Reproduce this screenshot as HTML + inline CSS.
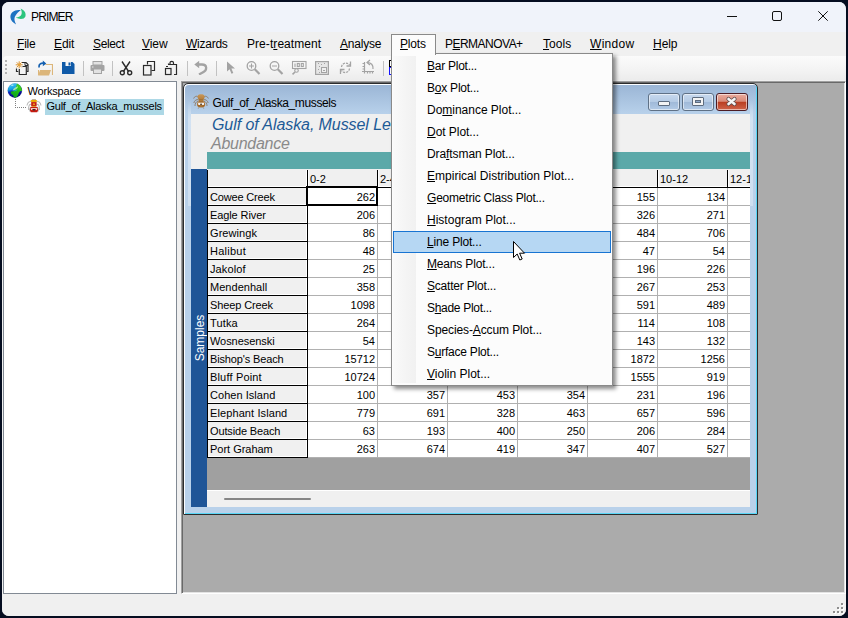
<!DOCTYPE html>
<html><head><meta charset="utf-8"><title>PRIMER</title>
<style>
*{box-sizing:border-box;margin:0;padding:0}
html,body{width:848px;height:618px;overflow:hidden;background:#050d20;font-family:"Liberation Sans",sans-serif;}
.abs{position:absolute}
span{position:absolute;white-space:nowrap;color:#000}
u{text-decoration:underline;text-underline-offset:1px;text-decoration-thickness:1px}
#win{position:absolute;left:2px;top:2px;width:844px;height:614px;border-radius:7px;background:#f0f0f0;overflow:hidden}
#title{position:absolute;left:0;top:0;width:844px;height:30px;background:#f0f3fa}
.tt{font-size:12px;line-height:14px}
#menubar{position:absolute;left:0;top:30px;width:844px;height:24px;background:#f0f0f0}
.mi{font-size:12px;line-height:14px}
#toolbar{position:absolute;left:1px;top:54px;width:843px;height:24px;background:linear-gradient(#fbfbfb,#f3f3f3 60%,#ececec);border-radius:4px 0 0 4px}
.sep{position:absolute;top:5px;width:1px;height:15px;background:#c2c2c2}
#left{position:absolute;left:1px;top:79px;width:174px;height:513px;background:#fff;border:1px solid #828a94}
#mdi{position:absolute;left:179px;top:79px;width:665px;height:513px;background:#ababab;border:1px solid;border-color:#a0a0a0 #fff #fff #a0a0a0;box-shadow:inset 1px 1px 0 0 #696969,inset -1px -1px 0 0 #e3e3e3}
#status{position:absolute;left:0;top:592px;width:844px;height:22px;background:#f0f0f0}
#child{position:absolute;left:181px;top:81px;width:575px;height:432px;border:1px solid #2c2c2c;border-radius:5px 5px 1px 1px;background:linear-gradient(#9ab5d5 0,#b7d0ea 29px,#b9d1ea 60px,#b9d1ea);box-shadow:inset 1px 1px 0 0 #fbfdff,inset -1px -1px 0 0 #58d6f6}
#content{position:absolute;left:7px;top:30px;width:559px;height:393px;background:#f0f0f0;overflow:hidden}
.gt{font-size:11px;line-height:13px}
.num{text-align:right}
#dd{position:absolute;left:389px;top:51px;width:222px;height:333px;background:#fcfcfc;border:1px solid #8a8a8a;box-shadow:3px 3px 4px rgba(0,0,0,.45)}
#ddg{position:absolute;left:1px;top:1px;width:23px;height:328px;background:linear-gradient(90deg,#fafafa,#f5f5f5 50%,#f1f1f1)}
#tab{position:absolute;left:389px;top:32px;width:45px;height:21px;background:#fcfcfc;border:1px solid #8a8a8a;border-bottom:none;z-index:3}

.cb{position:absolute;width:32px;height:18px;border-radius:3px;border:1px solid #5f7186;box-shadow:inset 0 0 0 1px rgba(255,255,255,.55)}
.cb.b{background:linear-gradient(#c7d9ee 0,#b5cbe5 48%,#9fb9d8 50%,#b2cae6 100%)}
.cb.c{background:linear-gradient(#eaac9f 0,#d98a78 46%,#b93c20 50%,#cf644a 100%);border-color:#4c1c24}
</style></head><body>
<div id="win">
<div id="title"><span id="t1" class="tt" style="left:29px;top:8px;letter-spacing:-0.85px;">PRIMER</span>
<svg class="abs" style="left:8px;top:6px" width="17" height="17" viewBox="0 0 17 17" ><path d="M10.800 2.200C5 1.200 0.200 4.200 0.400 9.200C0.600 12.600 3 14.600 6.200 16.400C4.600 13.600 3.600 10.600 5.600 7.600C6.800 5.200 8.800 3.600 10.800 2.200Z" fill="#1d72c2"/><path d="M10.600 0.600C14.200 2.200 16.400 5.200 15.400 8.400C14.200 11.400 9.800 11.600 5.600 9.600C8.800 9.400 11 8.400 11.600 6C12 4 11.400 2.400 10.600 0.600Z" fill="#2bc47e"/></svg>
<svg class="abs" style="left:718px;top:6px" width="120" height="20" viewBox="0 0 120 20" fill="none" stroke="#111" stroke-width="1"><path d="M7 8.500H17"/><rect x="52.500" y="3.500" width="9" height="9" rx="1.500"/><path d="M98.300 3.300L107.700 12.700M107.700 3.300L98.300 12.700"/></svg>
</div>
<div id="menubar">
<span id="t2" class="mi" style="left:15px;top:5px;letter-spacing:-0.21px;"><u>F</u>ile</span>
<span id="t3" class="mi" style="left:52px;top:5px;letter-spacing:-0.08px;"><u>E</u>dit</span>
<span id="t4" class="mi" style="left:91px;top:5px;letter-spacing:-0.36px;"><u>S</u>elect</span>
<span id="t5" class="mi" style="left:140px;top:5px;letter-spacing:-0.05px;"><u>V</u>iew</span>
<span id="t6" class="mi" style="left:184px;top:5px;letter-spacing:-0.25px;"><u>W</u>izards</span>
<span id="t7" class="mi" style="left:245px;top:5px;letter-spacing:0.06px;">Pre-t<u>r</u>eatment</span>
<span id="t8" class="mi" style="left:338px;top:5px;letter-spacing:-0.21px;"><u>A</u>nalyse</span>
<span id="t9" class="mi" style="left:398px;top:5px;letter-spacing:-0.18px;"><u>P</u>lots</span>
<span id="t10" class="mi" style="left:443px;top:5px;letter-spacing:-0.52px;">P<u>E</u>RMANOVA+</span>
<span id="t11" class="mi" style="left:541px;top:5px;letter-spacing:0.06px;"><u>T</u>ools</span>
<span id="t12" class="mi" style="left:588px;top:5px;letter-spacing:0.30px;"><u>W</u>indow</span>
<span id="t13" class="mi" style="left:651px;top:5px;letter-spacing:-0.05px;"><u>H</u>elp</span>
</div>
<div id="toolbar"><div class="abs" style="left:2px;top:4px;width:2px;height:2px;background:#b4b4b4"></div><div class="abs" style="left:2px;top:8px;width:2px;height:2px;background:#b4b4b4"></div><div class="abs" style="left:2px;top:12px;width:2px;height:2px;background:#b4b4b4"></div><div class="abs" style="left:2px;top:16px;width:2px;height:2px;background:#b4b4b4"></div><svg class="abs" style="left:12px;top:4px" width="15" height="16" viewBox="0 0 15 16" ><path d="M6.800 2.500H11L13 4.500V11.500H11.500" fill="#f4f4f4" stroke="#2b2b2b" stroke-width="1.200"/><path d="M10 2.700V5.500H13" fill="none" stroke="#2b2b2b" stroke-width="1"/><path d="M4.300 9V14.500H11.300V6.500H7.500" fill="#f4f4f4" stroke="#2b2b2b" stroke-width="1.200"/><path d="M1.500 8.500V11.500H3.300" fill="none" stroke="#2b2b2b" stroke-width="1.200"/><g stroke="#d98a1e" stroke-width="0.900"><path d="M4.200 1.300V8.300M0.700 4.800H7.700M1.700 2.300L6.700 7.300M6.700 2.300L1.700 7.300"/></g><circle cx="4.200" cy="4.800" r="1.200" fill="#e9a53a"/></svg><svg class="abs" style="left:34px;top:4px" width="16" height="16" viewBox="0 0 16 16" ><path d="M8.500 4.500H15.500V15" fill="none" stroke="#dcb67a" stroke-width="1.200"/><path d="M1 15.500L3 10H14L12 15.500Z" fill="#dcb67a"/><path d="M1.500 15V10" stroke="#dcb67a" stroke-width="1"/><path d="M2 7.500C1.500 3.500 4.500 2.800 7.500 3.300" fill="none" stroke="#1560b0" stroke-width="1.700"/><path d="M5.800 0.500L9.300 3.400L5.800 6.300Z" fill="#1560b0"/></svg><svg class="abs" style="left:59px;top:6px" width="13" height="12" viewBox="0 0 13 12" ><path d="M0 0H10.500L12.500 2V12H0Z" fill="#0f5aa8"/><rect x="3.500" y="0" width="5.500" height="4" fill="#f6f6f6"/><rect x="6.500" y="0.500" width="2" height="3" fill="#0f5aa8"/></svg><div class="sep" style="left:80px"></div><svg class="abs" style="left:87px;top:5px" width="15" height="13" viewBox="0 0 15 13" ><rect x="3" y="0.500" width="9" height="3.500" fill="#e2e2e2" stroke="#a3a3a3" stroke-width="1"/><rect x="0.500" y="4" width="14" height="6" rx="1" fill="#a3a3a3"/><rect x="3.500" y="8" width="8" height="4.500" fill="#e2e2e2" stroke="#a3a3a3" stroke-width="1"/><rect x="2" y="5.500" width="1.500" height="1" fill="#e8e8e8"/></svg><div class="sep" style="left:109px"></div><svg class="abs" style="left:116px;top:5px" width="14" height="15" viewBox="0 0 14 15" ><g fill="none" stroke="#2b2b2b" stroke-width="1.400"><path d="M3 0.500L9.600 10.500M11 0.500L4.400 10.500"/><circle cx="3.300" cy="11.800" r="2"/><circle cx="10.700" cy="11.800" r="2"/></g></svg><svg class="abs" style="left:139px;top:4px" width="14" height="16" viewBox="0 0 14 16" ><g fill="none" stroke="#2b2b2b" stroke-width="1.200"><path d="M5.500 4.500V1.500H12.500V10.500H9.500"/><rect x="1.500" y="5.500" width="7.500" height="9.500" fill="#f2f2f2"/></g></svg><svg class="abs" style="left:161px;top:4px" width="15" height="16" viewBox="0 0 15 16" ><g fill="none" stroke="#2b2b2b" stroke-width="1.200"><path d="M4.500 4.500V3.500 M4 4.500H12.500V14.500H10" fill="#f2f2f2"/><path d="M6 4V2.800C6 1 9.500 1 9.500 2.800V4" /><rect x="1.500" y="8.500" width="5.500" height="6" fill="#f2f2f2"/><path d="M2 6.500H4"/></g></svg><div class="sep" style="left:184px"></div><svg class="abs" style="left:191px;top:4px" width="15" height="15" viewBox="0 0 15 15" ><path d="M2.500 4.500H8C13.500 4.500 13 10 9.500 12L5 14.500" fill="none" stroke="#a3a3a3" stroke-width="2.300"/><path d="M0.300 4.500L5.200 0.800V8.200Z" fill="#a3a3a3"/></svg><div class="sep" style="left:213px"></div><svg class="abs" style="left:223px;top:5px" width="10" height="14" viewBox="0 0 10 14" ><path d="M1 0.500V10.500L3.600 8.200L5.500 12.800L7.300 12L5.400 7.600H9Z" fill="#a3a3a3"/></svg><svg class="abs" style="left:243px;top:4px" width="15" height="16" viewBox="0 0 15 16" ><g fill="none" stroke="#a3a3a3"><circle cx="5.500" cy="6" r="4.300" stroke-width="1.300"/><path d="M3 6H8M5.500 3.500V8.500" stroke-width="1.100"/><path d="M8.800 9.300L13.500 14" stroke-width="2.200"/></g></svg><svg class="abs" style="left:266px;top:4px" width="15" height="16" viewBox="0 0 15 16" ><g fill="none" stroke="#a3a3a3"><circle cx="5.500" cy="6" r="4.300" stroke-width="1.300"/><path d="M3 6H8" stroke-width="1.100"/><path d="M8.800 9.300L13.500 14" stroke-width="2.200"/></g></svg><svg class="abs" style="left:288px;top:4px" width="16" height="15" viewBox="0 0 16 15" ><g fill="none" stroke="#a3a3a3" stroke-width="1.100"><rect x="1.500" y="1.500" width="13.500" height="7"/><path d="M4 3.500V7"/><rect x="6.300" y="3.500" width="2" height="3"/><rect x="10.300" y="3.500" width="2" height="3"/><circle cx="5.500" cy="10.500" r="1.800" fill="#f2f2f2"/><path d="M4 12L1.500 14.300" stroke-width="1.600"/></g></svg><svg class="abs" style="left:312px;top:5px" width="14" height="14" viewBox="0 0 14 14" ><rect x="0.600" y="0.600" width="12.800" height="12.800" fill="#e6e6e6" stroke="#a3a3a3" stroke-width="1.200"/><rect x="6.500" y="6.500" width="5" height="5" fill="#efefef" stroke="#a3a3a3" stroke-width="1"/><g fill="#a3a3a3"><rect x="3" y="2" width="1" height="1"/><rect x="6" y="3" width="1" height="1"/><rect x="9" y="2" width="1" height="1"/><rect x="4" y="5" width="1" height="1"/><rect x="3" y="8" width="1" height="1"/><rect x="4" y="11" width="1" height="1"/><rect x="8" y="9" width="2" height="1"/></g></svg><svg class="abs" style="left:336px;top:5px" width="13" height="14" viewBox="0 0 13 14" ><g fill="none" stroke="#a3a3a3" stroke-width="1.300" stroke-dasharray="2.200 1"><path d="M2.500 6C3 1.500 8.500 1 10.500 4"/><path d="M10.500 7.500C10 12 4.500 12.800 2.500 9.500"/></g><path d="M11.500 0.500V5H7.500" fill="none" stroke="#a3a3a3" stroke-width="1.300"/><path d="M1.500 13V8.500H5.500" fill="none" stroke="#a3a3a3" stroke-width="1.300"/></svg><svg class="abs" style="left:358px;top:3px" width="14" height="16" viewBox="0 0 14 16" ><g fill="none" stroke="#a3a3a3" stroke-width="1.200"><path d="M3.500 3V14.500M1 12.500H13"/><path d="M1.500 4.500H3.500M1.500 7.500H3.500M1.500 10H3.500M6.500 12.500V14.500M9 12.500V14.500M11.500 12.500V14.500"/><path d="M12 10C12.500 6 10 3.500 6.500 3.500"/><path d="M9 1L6 3.500L9 6"/></g></svg><div class="sep" style="left:380px"></div><div class="abs" style="left:386px;top:4px;width:3px;height:7px;border:1px solid #000;border-right:none;background:#fff"></div><div class="abs" style="left:386px;top:11px;width:3px;height:8px;border:1px solid #1414ff;border-right:none;background:#fff"></div></div>
<div id="left"><svg class="abs" style="left:3px;top:1px" width="16" height="16" viewBox="0 0 16 16" ><defs><linearGradient id="gl" x1="0.200" y1="0" x2="0.500" y2="1"><stop offset="0" stop-color="#4fd0f6"/><stop offset="0.400" stop-color="#0f9ce2"/><stop offset="0.560" stop-color="#0c22c0"/><stop offset="1" stop-color="#05056e"/></linearGradient><linearGradient id="gg" x1="0.800" y1="0" x2="0.300" y2="1"><stop offset="0" stop-color="#58d81c"/><stop offset="0.450" stop-color="#22c016"/><stop offset="1" stop-color="#0aa01a"/></linearGradient><clipPath id="gc"><circle cx="7.850" cy="7.500" r="7.200"/></clipPath></defs><circle cx="7.850" cy="7.500" r="7.200" fill="url(#gl)"/><g clip-path="url(#gc)"><path d="M10 0.500C12.500 1 15.500 3.500 15.200 7.500C14.800 8.500 14 7.800 13.300 8.200C12.300 8.800 11.800 10 11.300 11.200C10.800 12.300 10.300 13.500 9.300 14.800C8.500 15.300 7.200 15 6.800 14C6.500 13 6.500 12.300 5.500 11.800C4.300 11.200 3.500 10.200 3.700 9.200C4 8.200 5.500 8.300 6.800 8C8 7.600 8 6.500 8.500 5.500C9 4.200 9.500 2.500 10 0.500Z" fill="url(#gg)"/><path d="M5.500 7.200C6.300 5.600 8.800 3.800 11 3.200C11.500 4 10 5.500 9 6.300C8 7 6.500 7.800 5.500 7.200Z" fill="#b4f0b0" opacity="0.850"/><path d="M6.800 7.800C7.800 7.900 9.500 7.300 10.300 6.500" stroke="#16b4e6" stroke-width="0.900" fill="none"/><ellipse cx="5.300" cy="2.300" rx="1.300" ry="0.800" fill="#c8f4ee" opacity="0.800"/></g><circle cx="7.850" cy="7.500" r="7.100" fill="none" stroke="#202060" stroke-opacity="0.250" stroke-width="0.500"/></svg><span id="t14" class="gt" style="left:23.5px;top:3px;letter-spacing:-0.18px;">Workspace</span><div class="abs" style="left:11px;top:17px;width:1px;height:9px;background:repeating-linear-gradient(#808080 0 1px,transparent 1px 2px)"></div><div class="abs" style="left:11px;top:25px;width:12px;height:1px;background:repeating-linear-gradient(90deg,#808080 0 1px,transparent 1px 2px)"></div><svg class="abs" style="left:22px;top:17px" width="16" height="15" viewBox="0 0 16 15" ><g fill="none" stroke="#bdbdbd" stroke-width="1.100"><path d="M5.500 2.800C3.500 1.800 1.500 3.500 1 6.500"/><path d="M10.500 2.800C12.500 1.800 14.500 3.500 15 6.500"/><path d="M5.500 5.500C3.500 4.800 2.200 7 2.500 11"/><path d="M10.500 5.500C12.500 4.800 13.800 7 13.500 11"/><path d="M5 8C3.800 8.500 3.500 10.500 3.800 12.500"/><path d="M11 8C12.200 8.500 12.500 10.500 12.200 12.500"/></g><path d="M5.800 0.300H10V1H5.800Z" fill="#9aa0b0"/><path d="M5.100 1.300C5.100 0.600 10.700 0.600 10.700 1.300V3.300H5.100Z" fill="#e8a806"/><rect x="5.200" y="3.100" width="5.400" height="4" fill="#c41a10"/><rect x="6.800" y="4.600" width="2.200" height="1.100" rx="0.500" fill="#f4c020"/><rect x="5.800" y="6.900" width="4.200" height="0.900" fill="#e8c010"/><path d="M5 7.700H11C12.300 8.500 12.600 11.500 11.200 13.200H4.800C3.400 11.500 3.700 8.500 5 7.700Z" fill="#c41a10"/><path d="M4.600 9.300H11.400L10.800 11.300L9.700 9.900L8 11.800L6.300 9.900L5.200 11.300Z" fill="#fff"/><path d="M6.600 10.800L8 9.800L9.400 10.800L8.800 11.400H7.200Z" fill="#1a0000"/></svg><div class="abs" style="left:41px;top:17px;width:119px;height:16px;background:#add8e6"></div><span id="t15" class="gt" style="left:42.5px;top:18px;letter-spacing:-0.26px;">Gulf_of_Alaska_mussels</span></div>
<div id="mdi"></div>
<div id="status"><div class="abs" style="left:840px;top:10px;width:2px;height:2px;background:#fff"></div><div class="abs" style="left:839px;top:9px;width:2px;height:2px;background:#8e8e8e"></div><div class="abs" style="left:836px;top:14px;width:2px;height:2px;background:#fff"></div><div class="abs" style="left:835px;top:13px;width:2px;height:2px;background:#8e8e8e"></div><div class="abs" style="left:840px;top:14px;width:2px;height:2px;background:#fff"></div><div class="abs" style="left:839px;top:13px;width:2px;height:2px;background:#8e8e8e"></div><div class="abs" style="left:832px;top:18px;width:2px;height:2px;background:#fff"></div><div class="abs" style="left:831px;top:17px;width:2px;height:2px;background:#8e8e8e"></div><div class="abs" style="left:836px;top:18px;width:2px;height:2px;background:#fff"></div><div class="abs" style="left:835px;top:17px;width:2px;height:2px;background:#8e8e8e"></div><div class="abs" style="left:840px;top:18px;width:2px;height:2px;background:#fff"></div><div class="abs" style="left:839px;top:17px;width:2px;height:2px;background:#8e8e8e"></div></div>
<div id="child"><span id="t16" class="tt" style="left:28.5px;top:12px;letter-spacing:-0.38px;">Gulf_of_Alaska_mussels</span><svg class="abs" style="left:9px;top:10px" width="16" height="15" viewBox="0 0 16 15" ><defs><linearGradient id="bb" x1="0" y1="0" x2="0" y2="1"><stop offset="0" stop-color="#c9995a"/><stop offset="0.350" stop-color="#b8803e"/><stop offset="1" stop-color="#a86f30"/></linearGradient></defs><g fill="none" stroke="#8d7863" stroke-width="0.900"><path d="M5 3C3.500 1.500 1.500 2.500 0.600 4.500"/><path d="M11 3C12.500 1.500 14.500 2.500 15.400 4.500"/><path d="M5.500 5.800C3.500 5 1.500 6.500 0.800 9"/><path d="M10.500 5.800C12.500 5 14.500 6.500 15.200 9"/><path d="M5 7.500C3 7.500 2 9.500 2 12"/><path d="M11 7.500C13 7.500 14 9.500 14 12"/><path d="M6 13.300L5.300 14.500M10 13.300L10.700 14.500"/></g><path d="M4.600 2.200C4.600 -0.400 11.600 -0.400 11.600 2.200V3.200C11.600 4.300 10.800 4.800 10.500 5.200V7.200C11.500 7.700 12.300 9 12.200 10.800C12.100 12.500 10.800 13.600 8.100 13.600C5.400 13.600 4.100 12.500 4 10.800C3.900 9 4.700 7.700 5.700 7.200V5.200C5.400 4.800 4.600 4.300 4.600 3.200Z" fill="url(#bb)"/><path d="M5.700 5.200C7 5.700 9.200 5.700 10.500 5.200M5.700 7.200C7 7.600 9.200 7.600 10.500 7.200" stroke="#96662c" stroke-width="0.600" fill="none"/><path d="M5 8.800H11.200L10.800 10.900H9.300L8.800 9.900H7.400L6.900 10.900H5.400Z" fill="#f4f4f4"/><rect x="7.400" y="9.500" width="1.400" height="1.600" fill="#5a4a3a"/><path d="M5.200 11.600L6.700 12M11 11.600L9.500 12" stroke="#8a5a22" stroke-width="0.700"/></svg><div class="cb b" style="left:464px;top:9px"><div class="abs" style="left:9px;top:7px;width:12px;height:5px;background:#f4f4f4;border:1px solid #5e6c7e;border-radius:1px"></div></div><div class="cb b" style="left:498px;top:9px"><div class="abs" style="left:9px;top:3px;width:12px;height:9px;background:#f4f4f4;border:1px solid #5e6c7e;border-radius:1px"></div><div class="abs" style="left:12px;top:6px;width:6px;height:3px;background:#8ea7c6;border:1px solid #5e6c7e"></div></div><div class="cb c" style="left:532px;top:9px"><svg class="abs" style="left:8px;top:2px" width="14" height="12" viewBox="0 0 14 12"><path d="M3.500 3L9.500 8M9.500 3L3.500 8" stroke="#5d4a4a" stroke-width="4.200" stroke-linecap="round"/><path d="M3.500 3L9.500 8M9.500 3L3.500 8" stroke="#f6f6f6" stroke-width="2.600" stroke-linecap="round"/></svg></div>
<div class="abs" style="left:4px;top:16px;width:3px;height:106px;background:linear-gradient(rgba(255,255,255,0),rgba(255,255,255,.38) 20px,rgba(255,255,255,.3))"></div>
<div class="abs" style="left:566px;top:16px;width:3px;height:106px;background:linear-gradient(rgba(255,255,255,0),rgba(255,255,255,.38) 20px,rgba(255,255,255,.3))"></div>
<div id="content">
<span id="t17" class="" style="left:21px;top:2px;font-size:16px;line-height:18px;font-style:italic;color:#1d5a96;letter-spacing:-0.08px">Gulf of Alaska, Mussel Length</span>
<span id="t18" class="" style="left:20px;top:21px;letter-spacing:-0.27px;font-size:16px;line-height:18px;font-style:italic;color:#8a8a8a">Abundance</span>
<div class="abs" style="left:16px;top:38px;width:560px;height:17px;background:#5ba9a9;"></div>
<div class="abs" style="left:0px;top:55px;width:16px;height:340px;background:#1f5597;"></div>
<div class="abs" style="left:-21px;top:217px;width:60px;height:14px;transform:rotate(-90deg);color:#fff;font-size:12px;text-align:center;line-height:14px">Samples</div>
<div class="abs" style="left:117px;top:74px;width:460px;height:270px;background:#fff;"></div>
<div class="abs" style="left:16px;top:344px;width:560px;height:32px;background:#a0a0a0;"></div>
<div class="abs" style="left:16px;top:376px;width:560px;height:1px;background:#fff;"></div>
<div class="abs" style="left:117px;top:91px;width:460px;height:1px;background:#b0b0b0;"></div>
<div class="abs" style="left:117px;top:109px;width:460px;height:1px;background:#b0b0b0;"></div>
<div class="abs" style="left:117px;top:127px;width:460px;height:1px;background:#b0b0b0;"></div>
<div class="abs" style="left:117px;top:145px;width:460px;height:1px;background:#b0b0b0;"></div>
<div class="abs" style="left:117px;top:163px;width:460px;height:1px;background:#b0b0b0;"></div>
<div class="abs" style="left:117px;top:181px;width:460px;height:1px;background:#b0b0b0;"></div>
<div class="abs" style="left:117px;top:199px;width:460px;height:1px;background:#b0b0b0;"></div>
<div class="abs" style="left:117px;top:217px;width:460px;height:1px;background:#b0b0b0;"></div>
<div class="abs" style="left:117px;top:235px;width:460px;height:1px;background:#b0b0b0;"></div>
<div class="abs" style="left:117px;top:253px;width:460px;height:1px;background:#b0b0b0;"></div>
<div class="abs" style="left:117px;top:271px;width:460px;height:1px;background:#b0b0b0;"></div>
<div class="abs" style="left:117px;top:289px;width:460px;height:1px;background:#b0b0b0;"></div>
<div class="abs" style="left:117px;top:307px;width:460px;height:1px;background:#b0b0b0;"></div>
<div class="abs" style="left:117px;top:325px;width:460px;height:1px;background:#b0b0b0;"></div>
<div class="abs" style="left:117px;top:343px;width:460px;height:1px;background:#b0b0b0;"></div>
<div class="abs" style="left:17px;top:72px;width:560px;height:1px;background:#fff;"></div>
<div class="abs" style="left:186px;top:74px;width:1px;height:270px;background:#b0b0b0;"></div>
<div class="abs" style="left:186px;top:56px;width:1px;height:18px;background:#000;"></div>
<div class="abs" style="left:256px;top:74px;width:1px;height:270px;background:#b0b0b0;"></div>
<div class="abs" style="left:256px;top:56px;width:1px;height:18px;background:#000;"></div>
<div class="abs" style="left:326px;top:74px;width:1px;height:270px;background:#b0b0b0;"></div>
<div class="abs" style="left:326px;top:56px;width:1px;height:18px;background:#000;"></div>
<div class="abs" style="left:396px;top:74px;width:1px;height:270px;background:#b0b0b0;"></div>
<div class="abs" style="left:396px;top:56px;width:1px;height:18px;background:#000;"></div>
<div class="abs" style="left:466px;top:74px;width:1px;height:270px;background:#b0b0b0;"></div>
<div class="abs" style="left:466px;top:56px;width:1px;height:18px;background:#000;"></div>
<div class="abs" style="left:536px;top:74px;width:1px;height:270px;background:#b0b0b0;"></div>
<div class="abs" style="left:536px;top:56px;width:1px;height:18px;background:#000;"></div>
<div class="abs" style="left:117px;top:56px;width:1px;height:17px;background:#fff;"></div>
<div class="abs" style="left:187px;top:56px;width:1px;height:17px;background:#fff;"></div>
<div class="abs" style="left:257px;top:56px;width:1px;height:17px;background:#fff;"></div>
<div class="abs" style="left:327px;top:56px;width:1px;height:17px;background:#fff;"></div>
<div class="abs" style="left:397px;top:56px;width:1px;height:17px;background:#fff;"></div>
<div class="abs" style="left:467px;top:56px;width:1px;height:17px;background:#fff;"></div>
<div class="abs" style="left:537px;top:56px;width:1px;height:17px;background:#fff;"></div>
<div class="abs" style="left:17px;top:90px;width:99px;height:1px;background:#fff;"></div>
<div class="abs" style="left:17px;top:108px;width:99px;height:1px;background:#fff;"></div>
<div class="abs" style="left:17px;top:126px;width:99px;height:1px;background:#fff;"></div>
<div class="abs" style="left:17px;top:144px;width:99px;height:1px;background:#fff;"></div>
<div class="abs" style="left:17px;top:162px;width:99px;height:1px;background:#fff;"></div>
<div class="abs" style="left:17px;top:180px;width:99px;height:1px;background:#fff;"></div>
<div class="abs" style="left:17px;top:198px;width:99px;height:1px;background:#fff;"></div>
<div class="abs" style="left:17px;top:216px;width:99px;height:1px;background:#fff;"></div>
<div class="abs" style="left:17px;top:234px;width:99px;height:1px;background:#fff;"></div>
<div class="abs" style="left:17px;top:252px;width:99px;height:1px;background:#fff;"></div>
<div class="abs" style="left:17px;top:270px;width:99px;height:1px;background:#fff;"></div>
<div class="abs" style="left:17px;top:288px;width:99px;height:1px;background:#fff;"></div>
<div class="abs" style="left:17px;top:306px;width:99px;height:1px;background:#fff;"></div>
<div class="abs" style="left:17px;top:324px;width:99px;height:1px;background:#fff;"></div>
<div class="abs" style="left:17px;top:342px;width:99px;height:1px;background:#fff;"></div>
<div class="abs" style="left:115px;top:56px;width:1px;height:288px;background:#fff;"></div>
<div class="abs" style="left:16px;top:73px;width:560px;height:1px;background:#000;"></div>
<div class="abs" style="left:16px;top:91px;width:101px;height:1px;background:#000;"></div>
<div class="abs" style="left:16px;top:109px;width:101px;height:1px;background:#000;"></div>
<div class="abs" style="left:16px;top:127px;width:101px;height:1px;background:#000;"></div>
<div class="abs" style="left:16px;top:145px;width:101px;height:1px;background:#000;"></div>
<div class="abs" style="left:16px;top:163px;width:101px;height:1px;background:#000;"></div>
<div class="abs" style="left:16px;top:181px;width:101px;height:1px;background:#000;"></div>
<div class="abs" style="left:16px;top:199px;width:101px;height:1px;background:#000;"></div>
<div class="abs" style="left:16px;top:217px;width:101px;height:1px;background:#000;"></div>
<div class="abs" style="left:16px;top:235px;width:101px;height:1px;background:#000;"></div>
<div class="abs" style="left:16px;top:253px;width:101px;height:1px;background:#000;"></div>
<div class="abs" style="left:16px;top:271px;width:101px;height:1px;background:#000;"></div>
<div class="abs" style="left:16px;top:289px;width:101px;height:1px;background:#000;"></div>
<div class="abs" style="left:16px;top:307px;width:101px;height:1px;background:#000;"></div>
<div class="abs" style="left:16px;top:325px;width:101px;height:1px;background:#000;"></div>
<div class="abs" style="left:16px;top:343px;width:101px;height:1px;background:#000;"></div>
<div class="abs" style="left:116px;top:56px;width:1px;height:288px;background:#000;"></div>
<div class="abs" style="left:16px;top:56px;width:1px;height:288px;background:#000;"></div>
<div class="abs" style="left:115px;top:72px;width:72px;height:20px;border:2px solid #000"></div>
<span id="t19" class="gt" style="left:119px;top:59px;">0-2</span>
<span id="t20" class="gt" style="left:189px;top:59px;">2-4</span>
<span id="t21" class="gt" style="left:259px;top:59px;">4-6</span>
<span id="t22" class="gt" style="left:329px;top:59px;">6-8</span>
<span id="t23" class="gt" style="left:399px;top:59px;">8-10</span>
<span id="t24" class="gt" style="left:469px;top:59px;">10-12</span>
<span id="t25" class="gt" style="left:539px;top:59px;">12-14</span>
<span id="t26" class="gt" style="left:19px;top:77px;letter-spacing:-0.16px;">Cowee Creek</span>
<span id="t27" class="gt num" style="left:117px;top:77px;width:67px">262</span>
<span id="t28" class="gt num" style="left:397px;top:77px;width:67px">155</span>
<span id="t29" class="gt num" style="left:467px;top:77px;width:67px">134</span>
<span id="t30" class="gt" style="left:19px;top:95px;letter-spacing:-0.10px;">Eagle River</span>
<span id="t31" class="gt num" style="left:117px;top:95px;width:67px">206</span>
<span id="t32" class="gt num" style="left:397px;top:95px;width:67px">326</span>
<span id="t33" class="gt num" style="left:467px;top:95px;width:67px">271</span>
<span id="t34" class="gt" style="left:19px;top:113px;letter-spacing:0.07px;">Grewingk</span>
<span id="t35" class="gt num" style="left:117px;top:113px;width:67px">86</span>
<span id="t36" class="gt num" style="left:397px;top:113px;width:67px">484</span>
<span id="t37" class="gt num" style="left:467px;top:113px;width:67px">706</span>
<span id="t38" class="gt" style="left:19px;top:131px;letter-spacing:0.26px;">Halibut</span>
<span id="t39" class="gt num" style="left:117px;top:131px;width:67px">48</span>
<span id="t40" class="gt num" style="left:397px;top:131px;width:67px">47</span>
<span id="t41" class="gt num" style="left:467px;top:131px;width:67px">54</span>
<span id="t42" class="gt" style="left:19px;top:149px;letter-spacing:0.12px;">Jakolof</span>
<span id="t43" class="gt num" style="left:117px;top:149px;width:67px">25</span>
<span id="t44" class="gt num" style="left:397px;top:149px;width:67px">196</span>
<span id="t45" class="gt num" style="left:467px;top:149px;width:67px">226</span>
<span id="t46" class="gt" style="left:19px;top:167px;letter-spacing:0.03px;">Mendenhall</span>
<span id="t47" class="gt num" style="left:117px;top:167px;width:67px">358</span>
<span id="t48" class="gt num" style="left:397px;top:167px;width:67px">267</span>
<span id="t49" class="gt num" style="left:467px;top:167px;width:67px">253</span>
<span id="t50" class="gt" style="left:19px;top:185px;letter-spacing:-0.12px;">Sheep Creek</span>
<span id="t51" class="gt num" style="left:117px;top:185px;width:67px">1098</span>
<span id="t52" class="gt num" style="left:397px;top:185px;width:67px">591</span>
<span id="t53" class="gt num" style="left:467px;top:185px;width:67px">489</span>
<span id="t54" class="gt" style="left:19px;top:203px;letter-spacing:0.14px;">Tutka</span>
<span id="t55" class="gt num" style="left:117px;top:203px;width:67px">264</span>
<span id="t56" class="gt num" style="left:397px;top:203px;width:67px">114</span>
<span id="t57" class="gt num" style="left:467px;top:203px;width:67px">108</span>
<span id="t58" class="gt" style="left:19px;top:221px;letter-spacing:-0.06px;">Wosnesenski</span>
<span id="t59" class="gt num" style="left:117px;top:221px;width:67px">54</span>
<span id="t60" class="gt num" style="left:397px;top:221px;width:67px">143</span>
<span id="t61" class="gt num" style="left:467px;top:221px;width:67px">132</span>
<span id="t62" class="gt" style="left:19px;top:239px;letter-spacing:-0.14px;">Bishop's Beach</span>
<span id="t63" class="gt num" style="left:117px;top:239px;width:67px">15712</span>
<span id="t64" class="gt num" style="left:397px;top:239px;width:67px">1872</span>
<span id="t65" class="gt num" style="left:467px;top:239px;width:67px">1256</span>
<span id="t66" class="gt" style="left:19px;top:257px;letter-spacing:0.17px;">Bluff Point</span>
<span id="t67" class="gt num" style="left:117px;top:257px;width:67px">10724</span>
<span id="t68" class="gt num" style="left:397px;top:257px;width:67px">1555</span>
<span id="t69" class="gt num" style="left:467px;top:257px;width:67px">919</span>
<span id="t70" class="gt" style="left:19px;top:275px;letter-spacing:0.04px;">Cohen Island</span>
<span id="t71" class="gt num" style="left:117px;top:275px;width:67px">100</span>
<span id="t72" class="gt num" style="left:187px;top:275px;width:67px">357</span>
<span id="t73" class="gt num" style="left:257px;top:275px;width:67px">453</span>
<span id="t74" class="gt num" style="left:327px;top:275px;width:67px">354</span>
<span id="t75" class="gt num" style="left:397px;top:275px;width:67px">231</span>
<span id="t76" class="gt num" style="left:467px;top:275px;width:67px">196</span>
<span id="t77" class="gt" style="left:19px;top:293px;letter-spacing:0.10px;">Elephant Island</span>
<span id="t78" class="gt num" style="left:117px;top:293px;width:67px">779</span>
<span id="t79" class="gt num" style="left:187px;top:293px;width:67px">691</span>
<span id="t80" class="gt num" style="left:257px;top:293px;width:67px">328</span>
<span id="t81" class="gt num" style="left:327px;top:293px;width:67px">463</span>
<span id="t82" class="gt num" style="left:397px;top:293px;width:67px">657</span>
<span id="t83" class="gt num" style="left:467px;top:293px;width:67px">596</span>
<span id="t84" class="gt" style="left:19px;top:311px;letter-spacing:-0.14px;">Outside Beach</span>
<span id="t85" class="gt num" style="left:117px;top:311px;width:67px">63</span>
<span id="t86" class="gt num" style="left:187px;top:311px;width:67px">193</span>
<span id="t87" class="gt num" style="left:257px;top:311px;width:67px">400</span>
<span id="t88" class="gt num" style="left:327px;top:311px;width:67px">250</span>
<span id="t89" class="gt num" style="left:397px;top:311px;width:67px">206</span>
<span id="t90" class="gt num" style="left:467px;top:311px;width:67px">284</span>
<span id="t91" class="gt" style="left:19px;top:329px;letter-spacing:-0.02px;">Port Graham</span>
<span id="t92" class="gt num" style="left:117px;top:329px;width:67px">263</span>
<span id="t93" class="gt num" style="left:187px;top:329px;width:67px">674</span>
<span id="t94" class="gt num" style="left:257px;top:329px;width:67px">419</span>
<span id="t95" class="gt num" style="left:327px;top:329px;width:67px">347</span>
<span id="t96" class="gt num" style="left:397px;top:329px;width:67px">407</span>
<span id="t97" class="gt num" style="left:467px;top:329px;width:67px">527</span>
<div class="abs" style="left:33px;top:384px;width:87px;height:2px;background:#868686;border-radius:1px"></div>
</div></div>
<div id="dd"><div id="ddg"></div>
<div class="abs" style="left:1px;top:177px;width:218px;height:22px;background:#b6d7f3;border:1px solid #1874d2"></div>
<span id="t98" class="mi" style="left:35px;top:5px;letter-spacing:-0.25px;"><u>B</u>ar Plot...</span>
<span id="t99" class="mi" style="left:35px;top:27px;letter-spacing:-0.23px;">B<u>o</u>x Plot...</span>
<span id="t100" class="mi" style="left:35px;top:49px;letter-spacing:-0.02px;">Do<u>m</u>inance Plot...</span>
<span id="t101" class="mi" style="left:35px;top:71px;letter-spacing:-0.05px;"><u>D</u>ot Plot...</span>
<span id="t102" class="mi" style="left:35px;top:93px;letter-spacing:-0.09px;">Dra<u>f</u>tsman Plot...</span>
<span id="t103" class="mi" style="left:35px;top:115px;letter-spacing:0.01px;"><u>E</u>mpirical Distribution Plot...</span>
<span id="t104" class="mi" style="left:35px;top:137px;letter-spacing:-0.21px;"><u>G</u>eometric Class Plot...</span>
<span id="t105" class="mi" style="left:35px;top:159px;letter-spacing:0.01px;"><u>H</u>istogram Plot...</span>
<span id="t106" class="mi" style="left:35px;top:181px;letter-spacing:-0.18px;"><u>L</u>ine Plot...</span>
<span id="t107" class="mi" style="left:35px;top:203px;letter-spacing:-0.17px;"><u>M</u>eans Plot...</span>
<span id="t108" class="mi" style="left:35px;top:225px;letter-spacing:-0.20px;"><u>S</u>catter Plot...</span>
<span id="t109" class="mi" style="left:35px;top:247px;letter-spacing:-0.30px;">S<u>h</u>ade Plot...</span>
<span id="t110" class="mi" style="left:35px;top:269px;letter-spacing:-0.11px;">Species-<u>A</u>ccum Plot...</span>
<span id="t111" class="mi" style="left:35px;top:291px;letter-spacing:-0.23px;">S<u>u</u>rface Plot...</span>
<span id="t112" class="mi" style="left:35px;top:313px;letter-spacing:-0.00px;"><u>V</u>iolin Plot...</span>
</div>
<div id="tab"><span id="t113" class="mi" style="left:8px;top:2px;letter-spacing:-0.18px;"><u>P</u>lots</span></div>
<div class="abs" style="left:390px;top:51px;width:43px;height:3px;background:#fcfcfc;z-index:4"></div>
<svg class="abs" style="left:510px;top:238px" width="14" height="22" viewBox="0 0 14 22" ><path d="M1.500 1.500V17.500L5.200 14L7.800 20L10.200 19L7.600 13.200H12.500Z" fill="#fff" stroke="#000" stroke-width="1" stroke-linejoin="miter"/></svg>
</div></body></html>
